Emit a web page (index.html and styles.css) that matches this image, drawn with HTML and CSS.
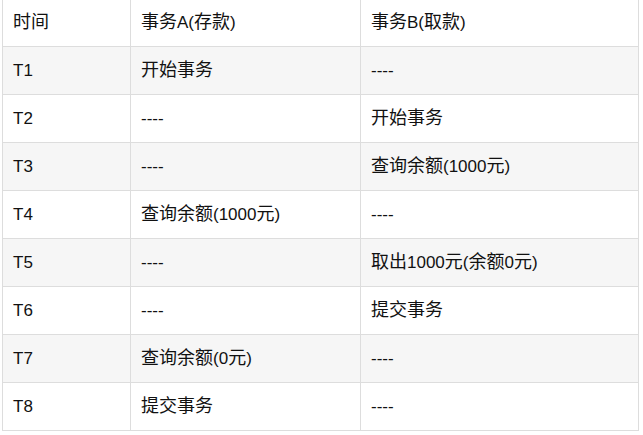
FILE: index.html
```html
<!DOCTYPE html>
<html>
<head>
<meta charset="utf-8">
<link rel="stylesheet" href="styles.css">
</head>
<body>
<table class="tx">
  <tr><td><span class="zh">时间</span></td><td><span class="zh">事务</span>A(<span class="zh">存款</span>)</td><td><span class="zh">事务</span>B(<span class="zh">取款</span>)</td></tr>
  <tr><td>T1</td><td><span class="zh">开始事务</span></td><td>----</td></tr>
  <tr><td>T2</td><td>----</td><td><span class="zh">开始事务</span></td></tr>
  <tr><td>T3</td><td>----</td><td><span class="zh">查询余额</span>(1000<span class="zh">元</span>)</td></tr>
  <tr><td>T4</td><td><span class="zh">查询余额</span>(1000<span class="zh">元</span>)</td><td>----</td></tr>
  <tr><td>T5</td><td>----</td><td><span class="zh">取出</span>1000<span class="zh">元</span>(<span class="zh">余额</span>0<span class="zh">元</span>)</td></tr>
  <tr><td>T6</td><td>----</td><td><span class="zh">提交事务</span></td></tr>
  <tr><td>T7</td><td><span class="zh">查询余额</span>(0<span class="zh">元</span>)</td><td>----</td></tr>
  <tr><td>T8</td><td><span class="zh">提交事务</span></td><td>----</td></tr>
</table>
</body>
</html>
```
FILE: styles.css
```css
html, body { margin: 0; padding: 0; background: #fff; }
body { padding: 0 0 0 2px; margin-top: -2px; }
.tx {
  border-collapse: collapse;
  width: 637px;
  font-family: "Liberation Sans", Arial, "Noto Sans CJK SC", sans-serif;
  font-size: 17px;
  line-height: 24px;
  color: #111;
  table-layout: fixed;
}
.tx td {
  border: 1px solid #ddd;
  height: 48px;
  box-sizing: border-box;
  padding: 0 10px;
  vertical-align: middle;
  white-space: nowrap;
}
.zh {
  font-family: "Noto Sans CJK SC", sans-serif;
  font-size: 18px;
  line-height: 1;
}
.tx td:nth-child(1) { width: 128px; }
.tx td:nth-child(2) { width: 230px; }
.tx tr:nth-child(even) td { background: #f6f6f6; }
```
